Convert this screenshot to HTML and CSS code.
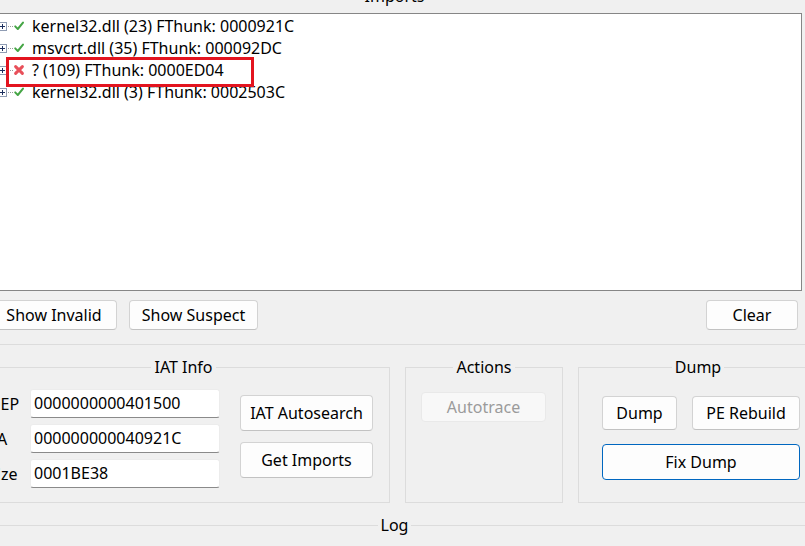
FILE: index.html
```html
<!DOCTYPE html>
<html>
<head>
<meta charset="utf-8">
<link rel="stylesheet" href="styles.css">
</head>
<body>
<div class="page">
  <fieldset class="group imports">
    <legend>Imports</legend>
    <div class="tree">
      <div class="row">
        <svg class="exp" width="9" height="9" viewBox="0 0 9 9"><rect x="0.5" y="0.5" width="8" height="8" fill="#fff" stroke="#8f9cb3"/><path d="M2 4.5H7M4.5 2V7" stroke="#1c2f5e" stroke-width="1"/></svg>
        <span class="dots"></span>
        <svg class="ico" width="12" height="12" viewBox="0 0 12 12"><path d="M2.2 6.4 L4.8 9 L10 2.6" fill="none" stroke="#45a545" stroke-width="2" stroke-linecap="round" stroke-linejoin="round"/></svg>
        <span class="txt">kernel32.dll (23) FThunk: 0000921C</span>
      </div>
      <div class="row">
        <svg class="exp" width="9" height="9" viewBox="0 0 9 9"><rect x="0.5" y="0.5" width="8" height="8" fill="#fff" stroke="#8f9cb3"/><path d="M2 4.5H7M4.5 2V7" stroke="#1c2f5e" stroke-width="1"/></svg>
        <span class="dots"></span>
        <svg class="ico" width="12" height="12" viewBox="0 0 12 12"><path d="M2.2 6.4 L4.8 9 L10 2.6" fill="none" stroke="#45a545" stroke-width="2" stroke-linecap="round" stroke-linejoin="round"/></svg>
        <span class="txt">msvcrt.dll (35) FThunk: 000092DC</span>
      </div>
      <div class="row">
        <svg class="exp" width="9" height="9" viewBox="0 0 9 9"><rect x="0.5" y="0.5" width="8" height="8" fill="#fff" stroke="#8f9cb3"/><path d="M2 4.5H7M4.5 2V7" stroke="#1c2f5e" stroke-width="1"/></svg>
        <span class="dots"></span>
        <svg class="ico" width="12" height="12" viewBox="0 0 12 12"><path d="M2.6 2.6 L9.4 9.4 M9.4 2.6 L2.6 9.4" fill="none" stroke="#e8505a" stroke-width="3" stroke-linecap="round"/></svg>
        <span class="txt">? (109) FThunk: 0000ED04</span>
      </div>
      <div class="row">
        <svg class="exp" width="9" height="9" viewBox="0 0 9 9"><rect x="0.5" y="0.5" width="8" height="8" fill="#fff" stroke="#8f9cb3"/><path d="M2 4.5H7M4.5 2V7" stroke="#1c2f5e" stroke-width="1"/></svg>
        <span class="dots"></span>
        <svg class="ico" width="12" height="12" viewBox="0 0 12 12"><path d="M2.2 6.4 L4.8 9 L10 2.6" fill="none" stroke="#45a545" stroke-width="2" stroke-linecap="round" stroke-linejoin="round"/></svg>
        <span class="txt">kernel32.dll (3) FThunk: 0002503C</span>
      </div>
      <div class="mark"></div>
    </div>
    <div class="btnrow">
      <button class="btn b-invalid">Show Invalid</button>
      <button class="btn b-suspect">Show Suspect</button>
      <span class="spacer"></span>
      <button class="btn b-clear">Clear</button>
    </div>
  </fieldset>

  <div class="groups">
    <fieldset class="group iat">
      <legend>IAT Info</legend>
      <div class="iat-body">
        <div class="fields">
          <label class="lbl">OEP</label><input class="edit" value="0000000000401500">
          <label class="lbl">VA</label><input class="edit" value="000000000040921C">
          <label class="lbl">Size</label><input class="edit" value="0001BE38">
        </div>
        <div class="iat-btns">
          <button class="btn b-tall">IAT Autosearch</button>
          <button class="btn b-tall">Get Imports</button>
        </div>
      </div>
    </fieldset>
    <fieldset class="group actions">
      <legend>Actions</legend>
      <div class="actions-body">
        <button class="btn b-auto" disabled>Autotrace</button>
      </div>
    </fieldset>
    <fieldset class="group dump">
      <legend>Dump</legend>
      <div class="dump-body">
        <div class="dump-row">
          <button class="btn b-dump">Dump</button>
          <button class="btn b-pe">PE Rebuild</button>
        </div>
        <button class="btn b-fix">Fix Dump</button>
      </div>
    </fieldset>
  </div>

  <fieldset class="group log">
    <legend>Log</legend>
  </fieldset>
</div>
</body>
</html>
```

FILE: styles.css
```css
html, body {
  margin: 0;
  padding: 0;
  background: #f0f0f0;
}
body {
  width: 805px;
  height: 546px;
  overflow: hidden;
  font-family: "Noto Sans", "Open Sans", sans-serif;
  font-size: 16px;
  color: #000;
}
.page {
  margin: -13px 0 0 -23px;
  width: 841px;
}
.group {
  margin: 0;
  border: 1px solid #dcdcdc;
  min-inline-size: 0;
  padding: 0;
}
.group > legend {
  margin: 0 auto;
  padding: 0 3px;
  line-height: 19px;
  font-size: 16px;
}
.imports {
  width: 835px;
  box-sizing: border-box;
  padding: 7px 9px 14px 9px;
}
.tree {
  position: relative;
  height: 275px;
  background: #fff;
  border: 1px solid #868686;
  padding-top: 1px;
}
.row {
  display: flex;
  align-items: center;
  height: 22px;
  padding-left: 10px;
  white-space: nowrap;
}
.exp {
  flex: none;
  display: block;
}
.dots {
  flex: none;
  width: 5px;
  margin-left: 1px;
  border-top: 1px dotted #9a9a9a;
}
.ico {
  flex: none;
  display: block;
}
.txt {
  margin-left: 7px;
  line-height: 22px;
}
.mark {
  position: absolute;
  left: 18px;
  top: 43px;
  width: 242px;
  height: 24px;
  border: 3px solid #e3141f;
}
.btnrow {
  display: flex;
  gap: 12px;
  margin-top: 9px;
  padding: 0 4px;
}
.spacer { flex: 1; }
.btn {
  font-family: inherit;
  font-size: 16px;
  color: #000;
  background: #fdfdfd;
  border: 1px solid #d3d3d3;
  border-bottom-color: #c2c2c2;
  border-radius: 4px;
  padding: 0;
  height: 30px;
  line-height: 20px;
  text-align: center;
}
.b-invalid { width: 126px; }
.b-suspect { width: 129px; }
.b-clear { width: 92px; }

.groups {
  display: grid;
  grid-template-columns: 413px 158px 240px;
  gap: 15px;
  margin-top: 13px;
}
.iat {
  padding: 12px 13px 14px 13px;
}
.iat-body {
  display: flex;
  align-items: flex-start;
  margin-left: -3px;
}
.fields {
  display: grid;
  grid-template-columns: 36px 190px;
  column-gap: 6px;
  row-gap: 6px;
  align-items: center;
}
.lbl {
  white-space: nowrap;
}
.edit {
  box-sizing: border-box;
  width: 190px;
  height: 29px;
  font-family: inherit;
  font-size: 16px;
  color: #000;
  background: #fff;
  border: 1px solid #ececec;
  border-bottom-color: #8a8a8a;
  border-radius: 3px;
  padding: 0 0 2px 3px;
  outline: none;
}
.iat-btns {
  display: flex;
  flex-direction: column;
  gap: 11px;
  margin: 6px 0 0 20px;
}
.b-tall {
  width: 133px;
  height: 36px;
}
.actions-body {
  padding: 15px 15px 0 15px;
}
.b-auto {
  display: block;
  width: 125px;
  height: 30px;
  background: #f8f8f8;
  border: 1px solid #e9e9e9;
  color: #9b9b9b;
}
.dump-body {
  padding: 19px 0 0 23px;
}
.dump-row {
  display: flex;
  gap: 15px;
}
.b-dump { width: 75px; height: 34px; }
.b-pe { width: 108px; height: 34px; }
.b-fix {
  display: block;
  margin-top: 14px;
  width: 198px;
  height: 36px;
  border: 1px solid #0067c0;
  background: #fdfdfd;
}
.log {
  width: 835px;
  box-sizing: border-box;
  margin-top: 13px;
  height: 60px;
}
```
